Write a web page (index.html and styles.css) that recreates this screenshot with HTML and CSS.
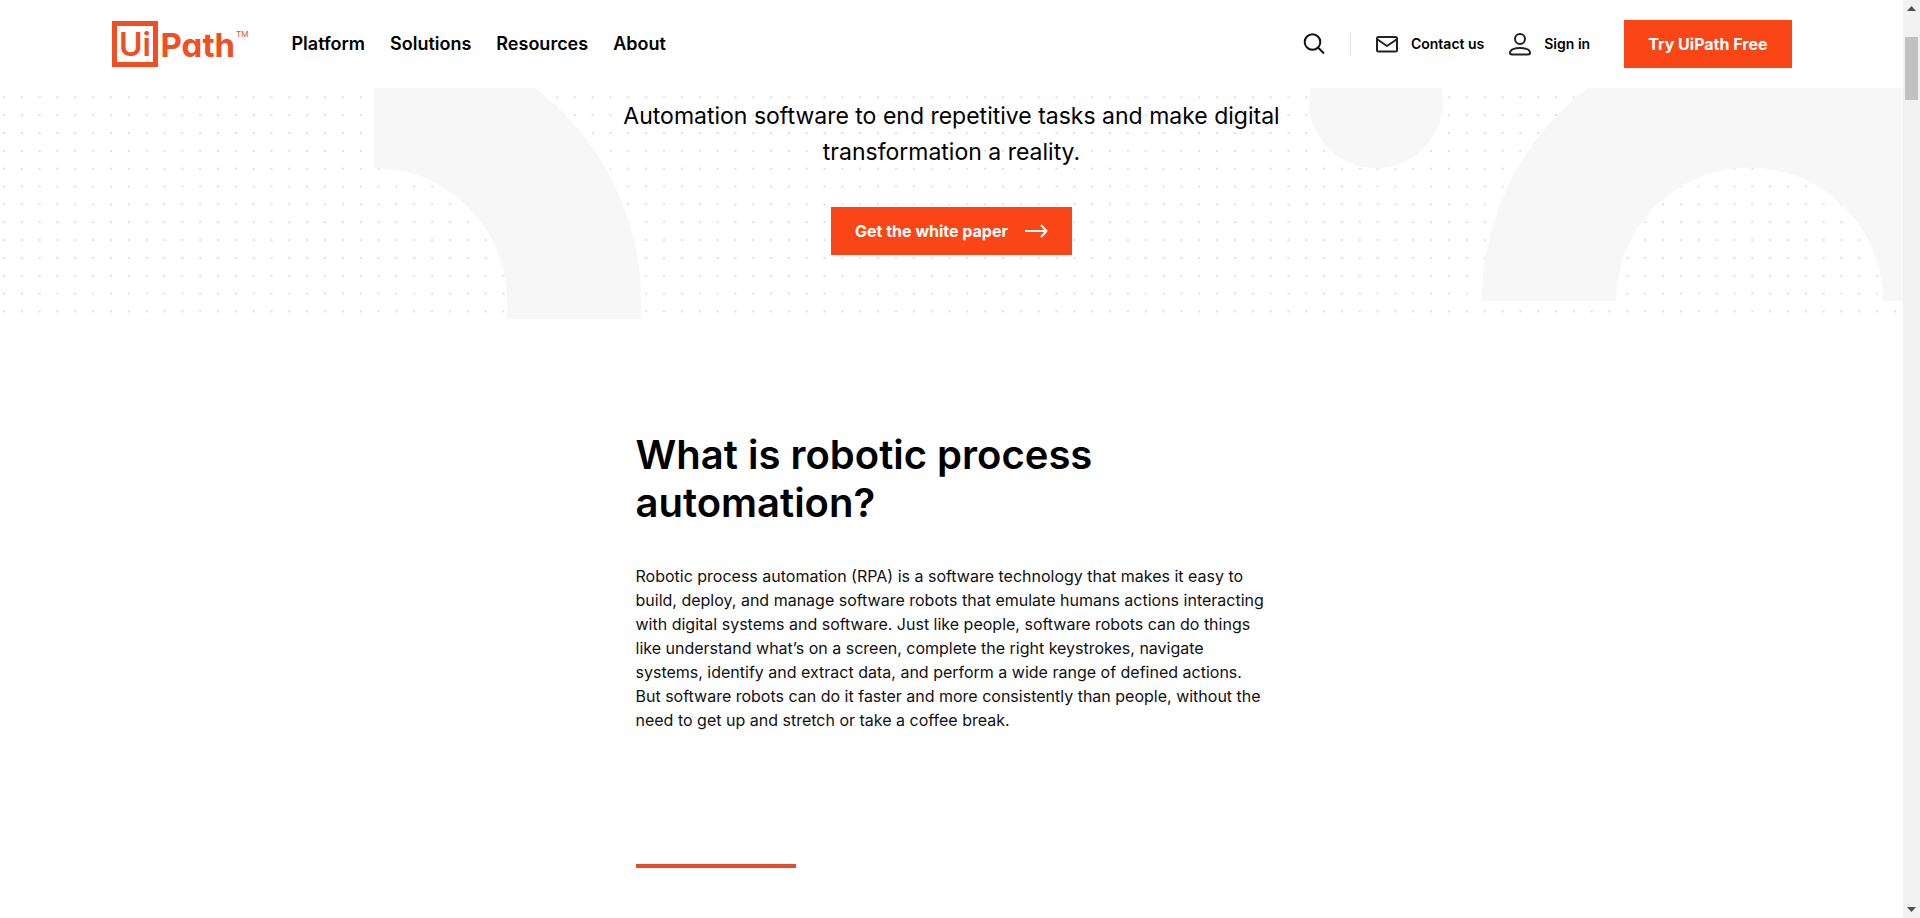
FILE: index.html
```html
<!DOCTYPE html>
<html lang="en">
<head>
<meta charset="utf-8">
<title>Robotic Process Automation | UiPath</title>
<link rel="stylesheet" href="styles.css">
</head>
<body>
<div class="page">
  <header class="header">
    <div class="header-inner">
      <a class="logo" href="#" aria-label="UiPath home">
        <svg width="138" height="48" viewBox="0 0 138 48">
          <rect x="2.5" y="3.5" width="41" height="41" fill="none" stroke="currentColor" stroke-width="5"/>
          <text class="logo-ui" x="7" y="36">Ui</text>
          <text class="logo-path" x="48.500" y="37">Path</text>
          <text class="logo-mark" x="124" y="17">TM</text>
        </svg>
      </a>
      <nav class="nav">
        <a href="#">Platform</a>
        <a href="#">Solutions</a>
        <a href="#">Resources</a>
        <a href="#">About</a>
      </nav>
      <div class="tools">
        <button class="search" type="button" aria-label="Search">
          <svg width="24" height="24" viewBox="0 0 24 24" fill="none" stroke="currentColor" stroke-width="2"><circle cx="10.5" cy="10" r="7.8"/><path d="M16 15.5l6 6"/></svg>
        </button>
        <a class="tool" href="#">
          <svg width="24" height="24" viewBox="0 0 24 24" fill="none" stroke="#222" stroke-width="2" stroke-linejoin="round"><rect x="2" y="5" width="20" height="14.5" rx="1.5"/><path d="M2.5 7.5L12 14l9.500-6.500"/></svg>
          Contact us
        </a>
        <a class="tool" href="#">
          <svg width="24" height="24" viewBox="0 0 24 24" fill="none" stroke="#222" stroke-width="2"><circle cx="12" cy="7" r="5"/><path d="M4 22.500h16c1.200 0 2-.6 2-1.700C22 17.500 17 16 12 16s-10 1.500-10 4.800C2 21.900 2.800 22.500 4 22.500z"/></svg>
          Sign in
        </a>
      </div>
      <a class="button" href="#">Try UiPath Free</a>
    </div>
  </header>
  <main>
    <section class="hero">
      <svg class="hero-art" viewBox="0 0 1903 231" preserveAspectRatio="xMidYMin slice" aria-hidden="true">
        <defs>
          <pattern id="dots" x="-5" y="0.4" width="17.84" height="17.84" patternUnits="userSpaceOnUse">
            <rect x="8" y="8" width="2" height="2" rx=".6" fill="#dcdcdc"/>
          </pattern>
        </defs>
        <rect width="1903" height="230" fill="url(#dots)"/>
        <g fill="#f7f7f7">
          <path d="M374-54A267 267 0 0 1 641 213V231H507V213A133 133 0 0 0 374 80z"/>
          <circle cx="1376" cy="13" r="67"/>
          <path d="M1482 213A267 267 0 0 1 2016 213H1883A133.500 133.500 0 0 0 1616 213z"/>
        </g>
      </svg>
      <div class="hero-content">
        <p class="hero-text">Automation software to end repetitive tasks and make digital transformation a reality.</p>
        <a class="button" href="#">Get the white paper
          <svg width="24" height="16" viewBox="0 0 24 16" fill="none" stroke="currentColor" stroke-width="2"><path d="M1 8h21M17 2l5.500 6-5.500 6"/></svg>
        </a>
      </div>
    </section>
    <section class="article">
      <h2>What is robotic process automation?</h2>
      <p>Robotic process automation (RPA) is a software technology that makes it easy to build, deploy, and manage software robots that emulate humans actions interacting with digital systems and software. Just like people, software robots can do things like understand what’s on a screen, complete the right keystrokes, navigate systems, identify and extract data, and perform a wide range of defined actions. But software robots can do it faster and more consistently than people, without the need to get up and stretch or take a coffee break.</p>
      <hr>
    </section>
  </main>
</div>
<div class="scrollbar" aria-hidden="true">
  <svg width="9" height="5" viewBox="0 0 9 5"><path d="M0 5L4.500 0 9 5z" fill="#505050"/></svg>
  <div class="track"><div class="thumb"></div></div>
  <svg width="9" height="5" viewBox="0 0 9 5"><path d="M0 0L4.500 5 9 0z" fill="#505050"/></svg>
</div>
</body>
</html>
```

FILE: styles.css
```css
* { box-sizing: border-box; }

body {
  margin: 0;
  display: flex;
  height: 100vh;
  overflow: hidden;
  background: #fff;
  color: #000;
  font-family: Inter, "Liberation Sans", sans-serif;
}

a { color: inherit; text-decoration: none; }

.page { flex: 1; min-width: 0; overflow: hidden; }

.header { background: #fff; padding: 0 24px; }

.header-inner {
  max-width: 1680px;
  height: 88px;
  margin: 0 auto;
  display: flex;
  align-items: center;
}

.logo { display: flex; color: #f04e23; }
.logo-ui { font-size: 32px; font-weight: 600; fill: currentColor; }
.logo-path { font-size: 33px; font-weight: 700; fill: currentColor; font-feature-settings: "cv11"; }
.logo-mark { font-size: 8px; fill: currentColor; }

.nav {
  display: flex;
  gap: 25px;
  margin-left: 42px;
  font-size: 18px;
  line-height: 24px;
  font-weight: 600;
}

.tools { display: flex; align-items: center; gap: 24px; margin-left: auto; }

.search {
  display: flex;
  padding: 0 24px 0 0;
  border: 0;
  border-right: 1px solid #e4e4e4;
  background: none;
  color: #111;
}

.tool {
  display: flex;
  align-items: center;
  gap: 12px;
  font-size: 14px;
  line-height: 20px;
  font-weight: 600;
}

.button {
  display: inline-flex;
  align-items: center;
  gap: 16px;
  height: 48px;
  padding: 0 24px;
  background: #fa4616;
  color: #fff;
  font-size: 16px;
  font-weight: 700;
  white-space: nowrap;
}

.header .button { margin-left: 34px; }

.hero { position: relative; height: 231px; }
.hero-art { position: absolute; inset: 0; width: 100%; height: 100%; }

.hero-content {
  position: relative;
  max-width: 720px;
  margin: 0 auto;
  padding-top: 10px;
  text-align: center;
}

.hero-text { margin: 0 0 37px; font-size: 23px; line-height: 36px; }

.article { max-width: 632px; margin: 0 auto; padding-top: 112px; }
.article h2 { max-width: 520px; margin: 0 0 37px; font-size: 40px; line-height: 48px; font-weight: 600; }
.article p { margin: 0; font-size: 16px; line-height: 24px; color: #111; }
.article hr { width: 160px; height: 4px; margin: 132px 0 0; border: 0; background: #e44c2a; }

.scrollbar {
  width: 17px;
  padding: 6px 0;
  display: flex;
  flex-direction: column;
  align-items: center;
  background: #f1f1f1;
}

.track { flex: 1; width: 13px; padding-top: 26px; }
.thumb { height: 63px; background: #c1c1c1; }
```
